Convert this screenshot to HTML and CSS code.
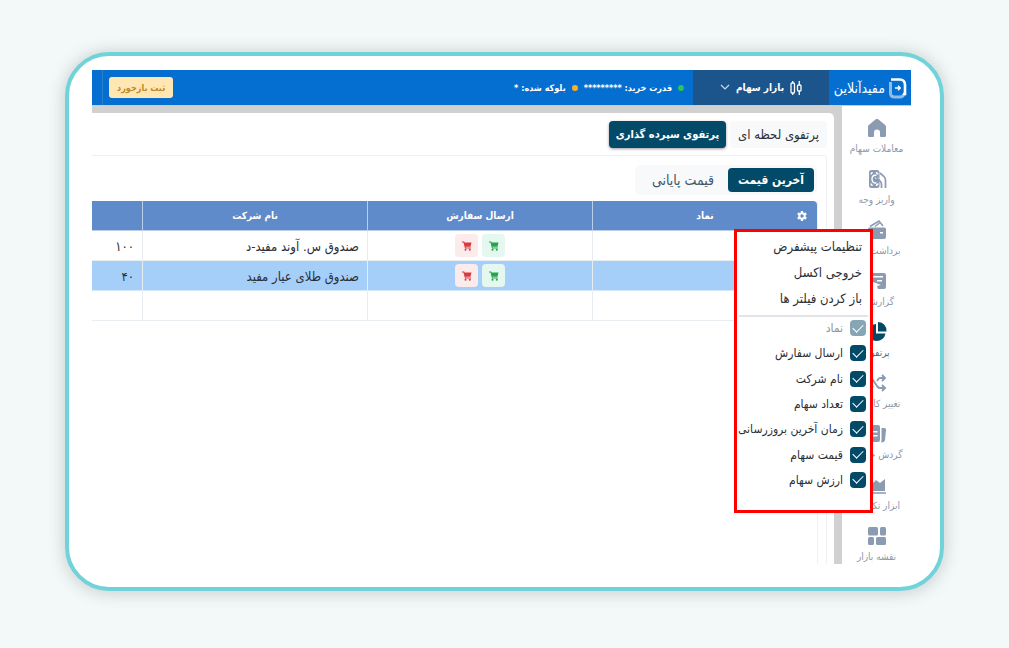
FILE: index.html
```html
<!DOCTYPE html>
<html lang="fa" dir="rtl">
<head>
<meta charset="utf-8">
<title>مفید آنلاین</title>
<link rel="stylesheet" href="styles.css">
</head>
<body>
<div class="frame">
<div class="app">
  <header class="topbar">
    <a class="brand" href="#">
      <svg width="18" height="22" viewBox="0 0 18 22" fill="none"><path d="M1.500 5v11q0 4 4 4h5.500q3 0 4-3" stroke="#8fbdea" stroke-width="3"/><path d="M2 2.500h8.500q5.500 0 5.500 5.500v9h-2" stroke="#fff" stroke-width="2.600"/><path d="M6 11h5M9 8.800l2.200 2.200L9 13.200" stroke="#fff" stroke-width="1.500"/></svg>
      <span>مفیدآنلاین</span>
    </a>
    <button class="market" type="button">
      <svg width="12" height="16" viewBox="0 0 12 16" fill="none" stroke="#fff" stroke-width="1.300"><rect x="1" y="3" width="3.500" height="10" rx="1"/><path d="M2.750 1v2M2.750 13v2M9.250 1v4M9.250 11v4"/><rect x="7.500" y="5" width="3.500" height="6" rx="1"/></svg>
      <span>بازار سهام</span>
      <svg width="10" height="7" viewBox="0 0 10 7" fill="none" stroke="#c9dcee" stroke-width="1.200"><path d="M1 1l4 4 4-4"/></svg>
    </button>
    <div class="funds">
      <span class="dot green"></span><span>قدرت خرید: *********</span>
      <span class="dot orange"></span><span>بلوکه شده: *</span>
    </div>
    <div class="feedback"><button type="button">ثبت بازخورد</button></div>
  </header>

  <div class="body">
    <nav class="side">
      <a href="#"><svg viewBox="0 0 20 20"><path d="M8.800 1.300q1.200-1 2.400 0l7 5.700q.800.700.800 1.700v8.800q0 1.500-1.500 1.500H14q-1 0-1-1v-4q0-2.500-3-2.500T7 14v4q0 1-1 1H2.500Q1 19 1 17.500V8.700Q1 7.700 1.800 7z"/></svg><span>معاملات سهام</span></a>
      <a href="#"><svg viewBox="0 0 20 20" fill="none"><rect x="2" y="1" width="10.500" height="18" rx="2.500"/><path d="M9.500 6.500Q5 5.500 5 10t4.500 4M8 9q2-1 4 1M3.500 5q1.500 0 1.500-2M9.500 3q0 2 2 2M3.500 15q1.500 0 1.500 2M9.500 17q0-2 2-2" fill="none" stroke="#fff" stroke-width="1.400"/><path d="M13 4l4 3.500q1.500 1.500 1.500 4V19M8.500 7.500l5 5q1 1 1 3V19" fill="none" stroke="#8a9bb2" stroke-width="1.700"/></svg><span>واریز وجه</span></a>
      <a href="#"><svg viewBox="0 0 20 20"><path fill-rule="evenodd" d="M2.500 7.500h15Q19 7.500 19 9v8q0 2-2 2H3q-2 0-2-2V9q0-1.500 1.500-1.500zM13 12v1.500h3V12z"/><path d="M3 6.500L12 1l4 5M8 6.500L12.500 3" fill="none" stroke="#8a9bb2" stroke-width="1.500"/></svg><span>برداشت وجه</span></a>
      <a href="#"><svg viewBox="0 0 20 20"><path fill-rule="evenodd" d="M3 2h14q2 0 2 2v12q0 2-2 2h-6l-1-3 4-1-8-3v7H3q-2 0-2-2V4q0-2 2-2zm1 3v1.500h12V5zm6 4v1.500h5V9z"/></svg><span>گزارشات</span></a>
      <a href="#" class="current"><svg viewBox="0 0 20 20"><path d="M9 2v9.500h9.500A9 8.500 0 1 1 9 2z"/><path d="M11 0q8.500.500 8.500 9.500H11z"/></svg><span>پرتفوی</span></a>
      <a href="#"><svg viewBox="0 0 20 20"><path d="M1 5h2q2 0 3 2l4 6q1 2 3 2h5M1 15h2q2 0 3-2M10 8q1.500-3 3-3h5M15 2l3 3-3 3M15 12l3 3-3 3" fill="none" stroke="#8a9bb2" stroke-width="1.900"/></svg><span>تغییر کارگزار</span></a>
      <a href="#"><svg viewBox="0 0 20 20"><path fill-rule="evenodd" d="M3 1h8q2 0 2 2v13q0 2-2 2H3q-2 0-2-2V3q0-2 2-2zm3 6v1.500h4.500V7zm0 4v1.500h4.500V11z"/><path d="M14.500 4H17q2.500 0 2 2.500L18 16q-.500 2.500-4 2.500.500-1 .500-3z"/></svg><span>گردش حساب</span></a>
      <a href="#"><svg viewBox="0 0 20 20"><path d="M1 8l3 2 5-5 4 3 5-4v12H1zM1 17.200h18v1.500H1z"/></svg><span>ابزار تکنیکال</span></a>
      <a href="#"><svg viewBox="0 0 20 20"><rect x="1" y="1" width="10" height="8.500" rx="1.500"/><rect x="13" y="1" width="6" height="8.500" rx="1.500"/><rect x="1" y="11" width="6" height="8" rx="1.500"/><rect x="9" y="11" width="10" height="8" rx="1.500"/></svg><span>نقشه بازار</span></a>
    </nav>

    <main class="main">
      <div class="panel">
        <div class="tabs">
          <button type="button">پرتفوی لحظه ای</button>
          <button type="button" class="active">پرتفوی سپرده گذاری</button>
        </div>
        <section class="card">
          <div class="segment">
            <button type="button" class="active">آخرین قیمت</button>
            <button type="button">قیمت پایانی</button>
          </div>
          <div class="grid">
          <table>
            <colgroup><col class="wide"><col class="wide"><col class="wide"><col></colgroup>
            <thead><tr>
              <th>نماد<button class="gear" type="button" aria-label="تنظیمات"><svg width="10" height="10" viewBox="0 0 20 20"><path fill="#fff" fill-rule="evenodd" d="M8 0h4l.600 3 2 1.100 2.900-1 2 3.500-2.300 2v2.800l2.300 2-2 3.500-2.900-1-2 1.100-.600 3H8l-.600-3-2-1.100-2.900 1-2-3.500 2.300-2V8.600L.500 6.600l2-3.500 2.900 1 2-1.100zM10 6.500a3.500 3.500 0 1 0 0 7 3.500 3.500 0 0 0 0-7z"/></svg></button></th>
              <th>ارسال سفارش</th><th>نام شرکت</th><th></th>
            </tr></thead>
            <tbody>
              <tr><td></td><td><div class="orders">
                <button class="buy" type="button" aria-label="خرید"><svg width="10" height="10" viewBox="0 0 10 10"><path d="M0 .500h2.200L2.600 1.500H9.500L8.500 5.800H3.500L3.700 6.500H9v1H3L1.500 1.500H0z"/><circle cx="3.500" cy="8.700" r="1"/><circle cx="7.800" cy="8.700" r="1"/></svg></button>
                <button class="sell" type="button" aria-label="فروش"><svg width="10" height="10" viewBox="0 0 10 10"><path d="M0 .500h2.200L2.600 1.500H9.500L8.500 5.800H3.500L3.700 6.500H9v1H3L1.500 1.500H0z"/><circle cx="3.500" cy="8.700" r="1"/><circle cx="7.800" cy="8.700" r="1"/></svg></button>
              </div></td><td class="fund">صندوق س. آوند مفید-د</td><td class="fund">۱۰۰</td></tr>
              <tr class="selected"><td></td><td><div class="orders">
                <button class="buy" type="button" aria-label="خرید"><svg width="10" height="10" viewBox="0 0 10 10"><path d="M0 .500h2.200L2.600 1.500H9.500L8.500 5.800H3.500L3.700 6.500H9v1H3L1.500 1.500H0z"/><circle cx="3.500" cy="8.700" r="1"/><circle cx="7.800" cy="8.700" r="1"/></svg></button>
                <button class="sell" type="button" aria-label="فروش"><svg width="10" height="10" viewBox="0 0 10 10"><path d="M0 .500h2.200L2.600 1.500H9.500L8.500 5.800H3.500L3.700 6.500H9v1H3L1.500 1.500H0z"/><circle cx="3.500" cy="8.700" r="1"/><circle cx="7.800" cy="8.700" r="1"/></svg></button>
              </div></td><td class="fund">صندوق طلای عیار مفید</td><td class="fund">۴۰</td></tr>
              <tr><td></td><td></td><td></td><td></td></tr>
            </tbody>
          </table>
          </div>
        </section>
      </div>
    </main>
  </div>

  <div class="menu">
    <div class="actions">
      <button type="button">تنظیمات پیشفرض</button>
      <button type="button">خروجی اکسل</button>
      <button type="button">باز کردن فیلتر ها</button>
    </div>
    <div class="columns">
      <label class="off"><input type="checkbox" checked disabled>نماد</label>
      <label><input type="checkbox" checked>ارسال سفارش</label>
      <label><input type="checkbox" checked>نام شرکت</label>
      <label><input type="checkbox" checked>تعداد سهام</label>
      <label><input type="checkbox" checked>زمان آخرین بروزرسانی</label>
      <label><input type="checkbox" checked>قیمت سهام</label>
      <label><input type="checkbox" checked>ارزش سهام</label>
    </div>
  </div>
</div>
</div>
</body>
</html>
```
FILE: styles.css
```css
* { box-sizing: border-box; }
body {
  margin: 0;
  min-height: 100vh;
  padding: 52px 65px 57px;
  background: #f3f9f9;
  font-family: "DejaVu Sans Condensed", "DejaVu Sans", sans-serif;
  font-size: 12px;
  color: #2b2f36;
}
button { font: inherit; color: inherit; border: 0; background: none; padding: 0; white-space: nowrap; }
a { color: inherit; text-decoration: none; }

.frame {
  padding: 14px 29px 23px 23px;
  border: 4px solid #70d3d9;
  border-radius: 44px;
  background: #fff;
  box-shadow: 0 1px 18px rgba(0, 0, 0, .2);
}
.app { position: relative; }

.topbar {
  display: flex;
  height: 36px;
  background: #046fd0;
  border-bottom: 1px solid #b3d2f0;
  color: #fff;
  font-weight: bold;
  white-space: nowrap;
}
.brand { width: 82px; display: flex; align-items: center; gap: 4px; padding-right: 4px; font-size: 14px; font-weight: normal; }
.market { width: 136px; display: flex; align-items: center; justify-content: center; gap: 6px; background: #1c558c; font-size: 10px; }
.funds { display: flex; align-items: center; gap: 6px; padding-right: 9px; font-size: 9px; }
.dot { width: 6px; height: 6px; border-radius: 50%; }
.green { background: #27c45a; }
.orange { background: #fdb022; }
.feedback { margin-right: auto; margin-left: 10px; padding-left: 6px; border-left: 1px solid #2b80cf; display: flex; align-items: center; }
.feedback button { height: 21px; padding: 0 8px; border-radius: 3px; background: #ffe6b3; color: #bd8a26; font-size: 9px; }

.body { display: flex; }
.side { width: 69px; flex: none; display: flex; flex-direction: column; padding-top: 12px; height: 458px; overflow: hidden; }
.side a { flex: none; height: 51px; display: flex; flex-direction: column; align-items: center; gap: 4px; font-size: 10px; line-height: 14px; color: #8c98a9; white-space: nowrap; }
.side svg { width: 20px; height: 20px; fill: #8a9bb2; }
.side .current svg { fill: #034a68; }
.side .current { color: #53677c; }

.main { flex: 1; min-width: 0; padding: 7px 8px 0 0; background: #d1d1d1; display: flex; overflow: hidden; }
.panel { flex: 1; min-width: 0; padding: 8px 7px 0 0; background: #fff; border-top-right-radius: 5px; display: flex; flex-direction: column; }
.tabs { display: flex; gap: 4px; }
.tabs button { height: 27px; padding: 0 8px; border-radius: 4px; background: #f8f9fb; font-size: 13px; }
.tabs .active, .segment .active { background: #034a68; color: #fff; font-size: 12px; font-weight: bold; }
.tabs .active { padding: 0 7px; font-size: 11px; box-shadow: 0 1px 3px rgba(0, 0, 0, .4); }
.card { flex: 1; margin-top: 7px; padding: 9px 9px 0 0; border: 1px solid #f0f0f2; border-width: 1px 1px 0 0; border-top-right-radius: 4px; display: flex; flex-direction: column; align-items: flex-start; }
.segment { display: flex; height: 30px; padding: 3px; border-radius: 6px; background: #f8f9fb; color: #3f5666; font-size: 14px; }
.segment button { height: 24px; width: 86px; border-radius: 4px; }
.segment button + button { width: 90px; }
.grid { flex: 1; align-self: stretch; margin-top: 6px; box-shadow: 1px 0 #f0f0f2; }

table { width: 100%; table-layout: fixed; border-spacing: 0; }
.wide { width: 225px; }
th, td { height: 30px; padding: 0 8px; border-bottom: 1px solid #e8edf2; border-left: 1px solid #e8edf2; white-space: nowrap; }
th:last-child, td:last-child { border-left: 0; }
th { position: relative; background: #5f8bca; border-color: #bacde9; color: #fff; font-size: 10px; }
th:first-child { border-top-right-radius: 4px; }
td { text-align: right; line-height: 16px; }
.fund { padding-top: 3px; font-size: 13px; }
.selected td { background: #a5cff9; border-bottom-color: #d6e9fc; }
.gear { position: absolute; right: 10px; top: 10px; height: 10px; line-height: 0; }
.orders { display: flex; justify-content: center; gap: 4px; }
.orders button { width: 23px; height: 23px; border-radius: 4px; display: grid; place-items: center; }
.buy { background: #e5f8f0; fill: #27a34b; }
.sell { background: #fcebeb; fill: #d93a40; }

.menu { position: absolute; top: 159px; right: 38px; width: 139px; padding: 1px 4px 22px 0; border: 3px solid #f00; background: #fff; }
.actions { display: flex; flex-direction: column; padding-bottom: 4px; margin-left: 2px; margin-right: -2px; border-bottom: 2px solid #e1e5ea; font-size: 13px; }
.actions button { height: 26px; text-align: right; padding-right: 6px; }
.columns { height: 168px; margin-top: 3px; display: flex; flex-direction: column; justify-content: space-between; }
.columns label { display: flex; align-items: center; gap: 7px; height: 16px; line-height: 16px; white-space: nowrap; }
.columns .off { color: #8f9296; }
input { appearance: none; flex: none; width: 16px; height: 16px; margin: 0; border-radius: 4px; background: #034a68; display: grid; place-items: center; }
input::after { content: ""; width: 9px; height: 5px; margin-bottom: 3px; border: solid #fff; border-width: 0 0 1px 1px; transform: rotate(-45deg); }
input:disabled { background: #86a6b5; }
```
